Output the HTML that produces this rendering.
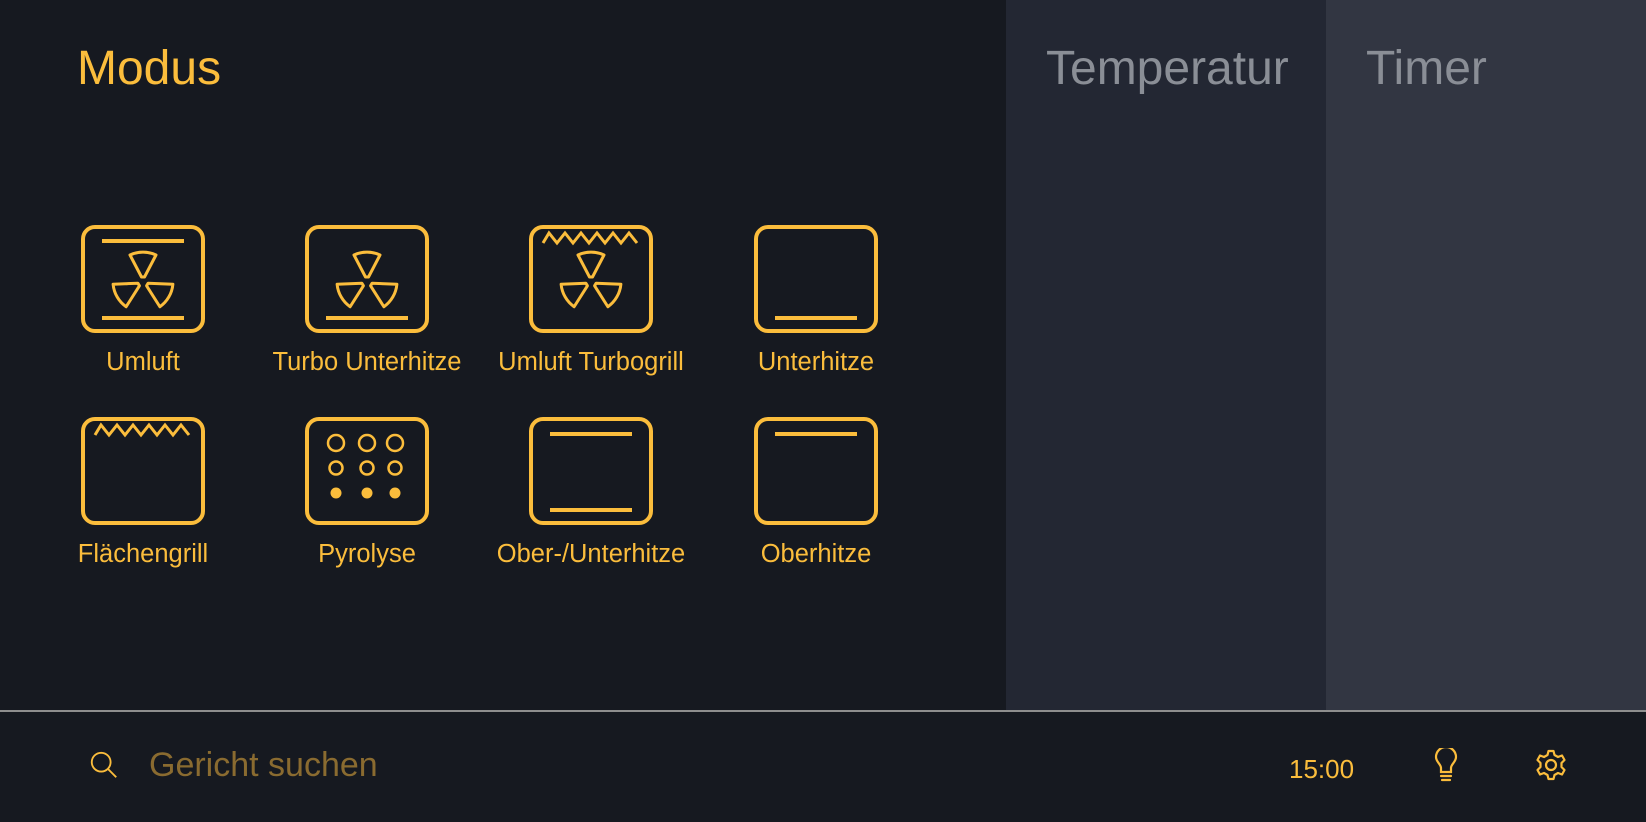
<!DOCTYPE html>
<html><head><meta charset="utf-8"><style>
*{margin:0;padding:0;box-sizing:border-box}
body{width:1646px;height:822px;background:#161920;font-family:"Liberation Sans",Roboto,sans-serif;position:relative;overflow:hidden}
.p{position:absolute;top:0;height:711px}
.t{position:absolute;font-size:48px;top:41px}
.ic{position:absolute;width:124px;height:108px}
.lb{position:absolute;width:240px;text-align:center;color:#fbbd3c;font-size:25.5px}
svg{display:block}
</style></head><body>
<div class="p" style="left:0;width:1006px;background:#161920"></div>
<div class="p" style="left:1006px;width:320px;background:#232733"></div>
<div class="p" style="left:1326px;width:320px;background:#323642"></div>
<div class="t" style="left:77px;color:#fbbd3c">Modus</div>
<div class="t" style="left:1046px;color:#8a8e96">Temperatur</div>
<div class="t" style="left:1366px;color:#8a8e96">Timer</div>
<div style="position:absolute;left:0;top:710px;width:1646px;height:2px;background:#8e8e8e"></div>

<svg width="0" height="0" style="position:absolute"><defs>
<g id="fan" fill="none" stroke="#fbbd3c" stroke-width="3" stroke-linejoin="round">
<path id="bl" d="M60.5,52 L49,30 A31,31 0 0 1 75,30 L63.5,52 Z"/>
<use href="#bl" transform="rotate(120 62 57)"/>
<use href="#bl" transform="rotate(240 62 57)"/>
</g>
<rect id="bx" x="2" y="2" width="120" height="104" rx="12" fill="none" stroke="#fbbd3c" stroke-width="4"/>
<polyline id="zz" points="14,18 20,8 28,18 36,8 44,18 52,8 60,18 68,8 76,18 84,8 92,18 100,8 108,18" fill="none" stroke="#fbbd3c" stroke-width="3" stroke-linejoin="miter"/>
</defs></svg>

<!-- row 1 -->
<svg class="ic" style="left:81px;top:225px" viewBox="0 0 124 108"><use href="#bx"/><line x1="21" y1="16" x2="103" y2="16" stroke="#fbbd3c" stroke-width="4"/><line x1="21" y1="93" x2="103" y2="93" stroke="#fbbd3c" stroke-width="4"/><use href="#fan"/></svg>
<svg class="ic" style="left:305px;top:225px" viewBox="0 0 124 108"><use href="#bx"/><line x1="21" y1="93" x2="103" y2="93" stroke="#fbbd3c" stroke-width="4"/><use href="#fan"/></svg>
<svg class="ic" style="left:529px;top:225px" viewBox="0 0 124 108"><use href="#bx"/><use href="#zz"/><use href="#fan"/></svg>
<svg class="ic" style="left:754px;top:225px" viewBox="0 0 124 108"><use href="#bx"/><line x1="21" y1="93" x2="103" y2="93" stroke="#fbbd3c" stroke-width="4"/></svg>
<div class="lb" style="left:23px;top:348px">Umluft</div>
<div class="lb" style="left:247px;top:348px">Turbo Unterhitze</div>
<div class="lb" style="left:471px;top:348px">Umluft Turbogrill</div>
<div class="lb" style="left:696px;top:348px">Unterhitze</div>

<!-- row 2 -->
<svg class="ic" style="left:81px;top:417px" viewBox="0 0 124 108"><use href="#bx"/><use href="#zz"/></svg>
<svg class="ic" style="left:305px;top:417px" viewBox="0 0 124 108"><use href="#bx"/>
<g fill="none" stroke="#fbbd3c" stroke-width="2.5"><circle cx="31" cy="26" r="8"/><circle cx="62" cy="26" r="8"/><circle cx="90" cy="26" r="8"/><circle cx="31" cy="51" r="6.5"/><circle cx="62" cy="51" r="6.5"/><circle cx="90" cy="51" r="6.5"/></g>
<g fill="#fbbd3c"><circle cx="31" cy="76" r="5.5"/><circle cx="62" cy="76" r="5.5"/><circle cx="90" cy="76" r="5.5"/></g></svg>
<svg class="ic" style="left:529px;top:417px" viewBox="0 0 124 108"><use href="#bx"/><line x1="21" y1="17" x2="103" y2="17" stroke="#fbbd3c" stroke-width="4"/><line x1="21" y1="93" x2="103" y2="93" stroke="#fbbd3c" stroke-width="4"/></svg>
<svg class="ic" style="left:754px;top:417px" viewBox="0 0 124 108"><use href="#bx"/><line x1="21" y1="17" x2="103" y2="17" stroke="#fbbd3c" stroke-width="4"/></svg>
<div class="lb" style="left:23px;top:540px">Flächengrill</div>
<div class="lb" style="left:247px;top:540px">Pyrolyse</div>
<div class="lb" style="left:471px;top:540px">Ober-/Unterhitze</div>
<div class="lb" style="left:696px;top:540px">Oberhitze</div>

<!-- bottom bar -->
<svg style="position:absolute;left:88px;top:749px" width="32" height="32" viewBox="0 0 34 34" fill="none" stroke="#fbbd3c" stroke-width="2"><circle cx="14" cy="14" r="10"/><line x1="21" y1="21" x2="30" y2="30"/></svg>
<div style="position:absolute;left:149px;top:746px;font-size:34px;color:#8a6b30">Gericht suchen</div>
<div style="position:absolute;left:1289px;top:754px;font-size:26px;color:#fbbd3c">15:00</div>
<svg style="position:absolute;left:1434px;top:748px" width="24" height="34" viewBox="0 0 24 34" fill="none" stroke="#fbbd3c" stroke-width="2.2" stroke-linecap="round"><path d="M7,24 L7,20 C7,16 2,14 2,9 A10,10 0 0 1 22,9 C22,14 17,16 17,20 L17,24 Z"/><line x1="7" y1="28" x2="17" y2="28"/><line x1="8" y1="32" x2="16" y2="32"/></svg>
<svg style="position:absolute;left:1535px;top:749px" width="32" height="32" viewBox="0 0 32 32" fill="none" stroke="#fbbd3c" stroke-width="2.2" stroke-linejoin="round"><path d="M13.5,2 L18.5,2 L19.5,6 L23,8 L27,6.5 L29.5,11 L26.5,14 L26.5,18 L29.5,21 L27,25.5 L23,24 L19.5,26 L18.5,30 L13.5,30 L12.5,26 L9,24 L5,25.5 L2.5,21 L5.5,18 L5.5,14 L2.5,11 L5,6.5 L9,8 L12.5,6 Z"/><circle cx="16" cy="16" r="5"/></svg>
</body></html>
